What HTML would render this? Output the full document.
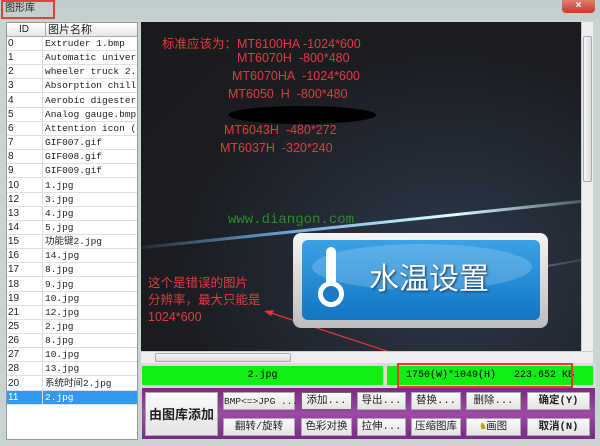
<!DOCTYPE html>
<html><head><meta charset="utf-8"><style>
*{margin:0;padding:0;box-sizing:border-box}
body{width:600px;height:446px;overflow:hidden;background:#c9d3cf;font-family:"Liberation Sans","Noto Sans CJK SC",sans-serif;position:relative}
.abs{position:absolute}
.row{position:absolute;left:7px;width:130px;height:14px;font-size:9.5px;line-height:14px;color:#222;border-bottom:1px solid #e0e0e0;background:#fff}
.row span{position:absolute;left:1px;font-family:"Liberation Sans",sans-serif;font-size:10px}
.row b{position:absolute;left:38px;font-weight:normal;white-space:nowrap;overflow:hidden;width:92px;font-family:"Liberation Mono","Noto Sans CJK SC",monospace}
.row:before{content:"";position:absolute;left:35px;top:0;height:14px;border-left:1px solid #ddd}
.red{color:#e23c3c;font-size:12.5px;position:absolute;white-space:nowrap}
.btn{position:absolute;background:linear-gradient(#fafafa,#e4e4e4);border:1px solid #aaa;font-size:10.5px;text-align:center;line-height:17px;color:#222;white-space:nowrap;font-family:"Liberation Mono","Noto Sans CJK SC",monospace}
</style></head><body>
<div class="abs" style="left:0;top:0;width:600px;height:20px;background:linear-gradient(#bfcfcd,#c5d0cb)"></div>
<div class="abs" style="left:1px;top:0;width:54px;height:19px;border:2px solid #e04040;font-size:10px;line-height:14px;padding-left:2px;color:#222">图形库</div>
<div class="abs" style="left:562px;top:0;width:33px;height:13px;background:linear-gradient(#e08070,#c03a2a);border-radius:0 0 4px 4px;color:#fff;font-size:10px;text-align:center;line-height:12px;font-weight:bold">×</div>
<div class="abs" style="left:6px;top:22px;width:132px;height:418px;background:#fff;border:1px solid #999"></div>
<div class="abs" style="left:7px;top:23px;width:130px;height:14px;background:linear-gradient(#fff,#e6e6e6);border-bottom:1px solid #aaa;font-size:10px;line-height:14px;color:#222"><span style="position:absolute;left:12px">ID</span><span style="position:absolute;left:38px;border-left:1px solid #aaa;padding-left:2px;font-size:11px">图片名称</span></div>
<div id="rows"></div>
<script>
var d=[["0","Extruder 1.bmp"],["1","Automatic univers"],["2","wheeler truck 2.b"],["3","Absorption chille"],["4","Aerobic digester"],["5","Analog gauge.bmp"],["6","Attention icon (e"],["7","GIF007.gif"],["8","GIF008.gif"],["9","GIF009.gif"],["10","1.jpg"],["12","3.jpg"],["13","4.jpg"],["14","5.jpg"],["15","功能键2.jpg"],["16","14.jpg"],["17","8.jpg"],["18","9.jpg"],["19","10.jpg"],["21","12.jpg"],["25","2.jpg"],["26","8.jpg"],["27","10.jpg"],["28","13.jpg"],["20","系统时间2.jpg"],["11","2.jpg"]];
var h="";for(var i=0;i<d.length;i++){var t=37+i*14.15;var s=i==25?"background:#3399ee;color:#fff":"";h+='<div class="row" style="top:'+t+'px;'+s+'"><span>'+d[i][0]+'</span><b>'+d[i][1]+'</b></div>';}
document.getElementById("rows").innerHTML=h;
</script>
<div class="abs" style="left:141px;top:22px;width:440px;height:329px;background:radial-gradient(ellipse at 70% 75%,#2e3a4c,#1b1d22 60%,#18191c);overflow:hidden">
<div class="abs" style="left:-20px;top:200px;width:500px;height:3px;background:linear-gradient(90deg,transparent,#6aa6d8,#dff,transparent);transform:rotate(-6deg)"></div>
<div class="abs" style="left:150px;top:260px;width:320px;height:2px;background:linear-gradient(90deg,transparent,#aab,transparent);transform:rotate(-10deg)"></div>
</div>
<div class="red" style="left:162px;top:33px">标准应该为：MT6100HA -1024*600</div>
<div class="red" style="left:237px;top:51px">MT6070H&nbsp; -800*480</div>
<div class="red" style="left:232px;top:69px">MT6070HA&nbsp; -1024*600</div>
<div class="red" style="left:228px;top:87px">MT6050&nbsp; H&nbsp; -800*480</div>
<div class="abs" style="left:228px;top:106px;width:148px;height:18px;background:#000;border-radius:50%"></div>
<div class="red" style="left:224px;top:123px">MT6043H&nbsp; -480*272</div>
<div class="red" style="left:220px;top:141px">MT6037H&nbsp; -320*240</div>
<div class="abs" style="left:228px;top:212px;font-family:'Liberation Mono',monospace;font-size:14px;color:#2a8a2a">www.diangon.com</div>
<div class="red" style="left:148px;top:275px;line-height:17px;font-size:12.5px">这个是错误的图片<br>分辨率，最大只能是<br>1024*600</div>
<svg class="abs" style="left:0;top:0" width="600" height="446"><line x1="268" y1="312" x2="420" y2="362" stroke="#e33" stroke-width="1.3"/><polygon points="264,311 274,310 271,316" fill="#e33"/></svg>
<div class="abs" style="left:293px;top:233px;width:255px;height:95px;border-radius:8px;background:linear-gradient(#f4f4f4,#bdbdbd)"></div>
<div class="abs" style="left:302px;top:240px;width:238px;height:80px;border-radius:6px;background:linear-gradient(#3aa2e6,#1276c4);overflow:hidden"><div class="abs" style="left:10px;top:4px;width:220px;height:46px;border-radius:50%;background:rgba(255,255,255,.18)"></div></div>
<div class="abs" style="left:326px;top:247px;width:10px;height:40px;background:#fff;border-radius:5px"></div>
<div class="abs" style="left:318px;top:281px;width:26px;height:26px;border:5px solid #fff;border-radius:50%;background:#1a7ac6"></div>
<div class="abs" style="left:369px;top:258px;font-size:30px;color:#fff;text-shadow:1px 1px 2px #135;font-family:'Noto Sans CJK SC',sans-serif;line-height:36px">水温设置</div>
<div class="abs" style="left:581px;top:22px;width:12px;height:329px;background:#eee;border-left:1px solid #ccc"><div class="abs" style="left:1px;top:14px;width:9px;height:146px;background:linear-gradient(90deg,#f6f6f6,#ddd);border:1px solid #aaa;border-radius:2px"></div></div>
<div class="abs" style="left:141px;top:351px;width:452px;height:12px;background:#eee;border-top:1px solid #ccc"><div class="abs" style="left:14px;top:1px;width:136px;height:9px;background:linear-gradient(#f6f6f6,#ddd);border:1px solid #aaa;border-radius:2px"></div></div>
<div class="abs" style="left:140px;top:363px;width:456px;height:26px;background:#d8dcd8"></div>
<div class="abs" style="left:142px;top:366px;width:241px;height:19px;background:#11ee11;font-family:'Liberation Mono',monospace;font-size:10px;text-align:center;line-height:19px">2.jpg</div>
<div class="abs" style="left:387px;top:366px;width:206px;height:19px;background:#11ee11;font-family:'Liberation Mono',monospace;font-size:10px;text-align:center;line-height:19px">1750(W)*1049(H)&nbsp;&nbsp;&nbsp;223.652 KB</div>
<div class="abs" style="left:397px;top:363px;width:176px;height:25px;border:2px solid #e33"></div>
<div class="abs" style="left:142px;top:388px;width:453px;height:51px;background:linear-gradient(#7a2a85,#9c4aa6 50%,#7a2a85)"></div>
<div class="btn" style="left:145px;top:392px;width:73px;height:44px;line-height:42px;font-size:13px;font-weight:bold;font-family:'Noto Sans CJK SC',sans-serif">由图库添加</div>
<div class="btn" style="left:223px;top:392px;width:72px;height:18px;font-size:9.5px">BMP&lt;=&gt;JPG ...</div>
<div class="btn" style="left:301px;top:392px;width:51px;height:18px;border-color:#666">添加...</div>
<div class="btn" style="left:357px;top:392px;width:49px;height:18px">导出...</div>
<div class="btn" style="left:411px;top:392px;width:50px;height:18px">替换...</div>
<div class="btn" style="left:466px;top:392px;width:55px;height:18px">删除...</div>
<div class="btn" style="left:527px;top:392px;width:63px;height:18px;font-weight:bold">确定(Y)</div>
<div class="btn" style="left:223px;top:418px;width:72px;height:18px">翻转/旋转</div>
<div class="btn" style="left:301px;top:418px;width:51px;height:18px">色彩对换</div>
<div class="btn" style="left:357px;top:418px;width:49px;height:18px">拉伸...</div>
<div class="btn" style="left:411px;top:418px;width:50px;height:18px">压缩图库</div>
<div class="btn" style="left:466px;top:418px;width:55px;height:18px"><span style="color:#c90">♞</span>画图</div>
<div class="btn" style="left:527px;top:418px;width:63px;height:18px;font-weight:bold">取消(N)</div>
</body></html>
